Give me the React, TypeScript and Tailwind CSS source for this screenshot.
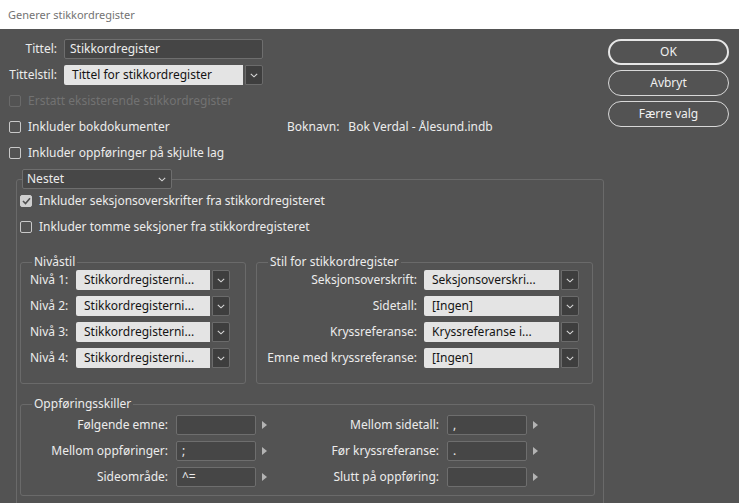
import type { ReactNode } from "react";

const Chevron = () => (
  <svg width="8" height="5" viewBox="0 0 8 5" fill="none">
    <path d="M0.8 0.8 L4 3.8 L7.2 0.8" stroke="#d8d8d8" strokeWidth="1.1" />
  </svg>
);

const Check = ({ checked = false, disabled = false, label }: { checked?: boolean; disabled?: boolean; label: string }) => (
  <div className={`flex h-5 items-center gap-[7px] ${disabled ? "text-[#727272]" : "text-[#ececec]"}`}>
    <span
      className={`flex h-[12px] w-[12px] items-center justify-center rounded-[2px] border ${
        disabled ? "border-[#6a6a6a]" : checked ? "border-[#cfcfcf] bg-[#cfcfcf]" : "border-[#c9c9c9]"
      }`}
    >
      {checked && (
        <svg width="9" height="8" viewBox="0 0 9 8" fill="none">
          <path d="M1 4 L3.5 6.5 L8 1.2" stroke="#505050" strokeWidth="1.6" />
        </svg>
      )}
    </span>
    <span>{label}</span>
  </div>
);

const StyleSelect = ({ value, width }: { value: string; width: string }) => (
  <div className={`flex h-[20px] gap-[2px] ${width}`}>
    <div className="flex flex-1 items-center rounded-l-[2px] bg-[#e4e4e4] pl-[8px] text-[#141414]">{value}</div>
    <div className="flex w-[18px] items-center justify-center rounded-r-[2px] border border-[#6b6b6b] bg-[#3e3e3e]">
      <Chevron />
    </div>
  </div>
);

const Group = ({ title, className, children }: { title: ReactNode; className: string; children: ReactNode }) => (
  <fieldset className={`rounded-[3px] border border-[#6a6a6a] ${className}`}>
    <legend className="ml-[11px] px-[2px] leading-4 text-[#ececec]">{title}</legend>
    {children}
  </fieldset>
);

const Separator = ({ label, value, labelW }: { label: string; value: string; labelW: string }) => (
  <div className="flex h-[20px] items-center">
    <span className={`${labelW} text-right`}>{label}</span>
    <div className="ml-[8px] flex h-[20px] w-[80px] items-center rounded-[2px] border border-[#6e6e6e] bg-[#464646] pl-[5px]">
      {value}
    </div>
    <svg className="ml-[6px]" width="5" height="8" viewBox="0 0 5 8">
      <path d="M0 0 L5 4 L0 8 Z" fill="#b4b4b4" />
    </svg>
  </div>
);

const Button = ({ label, primary = false }: { label: string; primary?: boolean }) => (
  <button
    className={`flex h-[26px] w-[121px] items-center justify-center rounded-full text-[#f0f0f0] ${
      primary ? "border-2 border-[#e6e6e6]" : "border border-[#d8d8d8]"
    }`}
  >
    {label}
  </button>
);

export default function App() {
  const levels = ["Nivå 1:", "Nivå 2:", "Nivå 3:", "Nivå 4:"];
  const styles = [
    ["Seksjonsoverskrift:", "Seksjonsoverskri..."],
    ["Sidetall:", "[Ingen]"],
    ["Kryssreferanse:", "Kryssreferanse i..."],
    ["Emne med kryssreferanse:", "[Ingen]"],
  ];

  return (
    <div
      className="h-[503px] w-[739px] overflow-hidden text-[12px] leading-4 text-[#ececec]"
      style={{ fontFamily: '"Noto Sans", "Open Sans", sans-serif' }}
    >
      <div className="flex h-[29px] items-center bg-white pl-[8px] text-[11px] text-[#737373]">Generer stikkordregister</div>

      <div className="flex h-[474px] bg-[#535353]">
        <div className="w-[608px] shrink-0 pt-[10px]">
          <div className="flex h-[20px] items-center">
            <span className="w-[57px] text-right">Tittel:</span>
            <div className="ml-[7px] flex h-[20px] w-[199px] items-center rounded-[2px] border border-[#6e6e6e] bg-[#454545] pl-[5px]">
              Stikkordregister
            </div>
          </div>
          <div className="mt-[6px] flex h-[20px] items-center">
            <span className="w-[57px] text-right">Tittelstil:</span>
            <div className="ml-[7px]">
              <StyleSelect value="Tittel for stikkordregister" width="w-[199px]" />
            </div>
          </div>

          <div className="mt-[6px] flex flex-col gap-[6px] pl-[9px]">
            <Check disabled label="Erstatt eksisterende stikkordregister" />
            <div className="flex items-center">
              <div className="w-[278px]">
                <Check label="Inkluder bokdokumenter" />
              </div>
              <span>Boknavn:</span>
              <span className="ml-[9px]">Bok Verdal - Ålesund.indb</span>
            </div>
            <Check label="Inkluder oppføringer på skjulte lag" />
          </div>

          <fieldset className="ml-[16px] mt-[6px] h-[340px] w-[588px] rounded-[3px] border border-[#6a6a6a] px-[3px]">
            <legend className="ml-[2px]">
              <div className="flex h-[20px] w-[150px] items-center justify-between rounded-[2px] border border-[#6e6e6e] bg-[#474747] pl-[4px] pr-[5px]">
                <span>Nestet</span>
                <Chevron />
              </div>
            </legend>
            <div className="mt-[2px] flex flex-col gap-[6px]">
              <Check checked label="Inkluder seksjonsoverskrifter fra stikkordregisteret" />
              <Check label="Inkluder tomme seksjoner fra stikkordregisteret" />
            </div>

            <div className="mt-[17px] flex gap-[10px]">
              <Group title="Nivåstil" className="h-[130px] w-[226px]">
                <div className="flex flex-col gap-[6px] pl-[9px]">
                  {levels.map((l) => (
                    <div key={l} className="flex items-center">
                      <span className="w-[46px]">{l}</span>
                      <StyleSelect value="Stikkordregisterni..." width="w-[154px]" />
                    </div>
                  ))}
                </div>
              </Group>
              <Group title="Stil for stikkordregister" className="h-[130px] w-[337px]">
                <div className="flex flex-col gap-[6px] pl-[9px]">
                  {styles.map(([l, v]) => (
                    <div key={l} className="flex items-center">
                      <span className="w-[151px] text-right">{l}</span>
                      <div className="ml-[7px]">
                        <StyleSelect value={v} width="w-[155px]" />
                      </div>
                    </div>
                  ))}
                </div>
              </Group>
            </div>

            <Group title="Oppføringsskiller" className="mt-[12px] h-[100px] w-[575px] pt-[3px]">
              <div className="flex">
                <div className="flex w-[260px] flex-col gap-[6px]">
                  <Separator label="Følgende emne:" value="" labelW="w-[147px]" />
                  <Separator label="Mellom oppføringer:" value=";" labelW="w-[147px]" />
                  <Separator label="Sideområde:" value="^=" labelW="w-[147px]" />
                </div>
                <div className="flex flex-col gap-[6px]">
                  <Separator label="Mellom sidetall:" value="," labelW="w-[158px]" />
                  <Separator label="Før kryssreferanse:" value="." labelW="w-[158px]" />
                  <Separator label="Slutt på oppføring:" value="" labelW="w-[158px]" />
                </div>
              </div>
            </Group>
          </fieldset>
        </div>

        <div className="flex flex-col gap-[5px] pt-[10px]">
          <Button primary label="OK" />
          <Button label="Avbryt" />
          <Button label="Færre valg" />
        </div>
      </div>
    </div>
  );
}
